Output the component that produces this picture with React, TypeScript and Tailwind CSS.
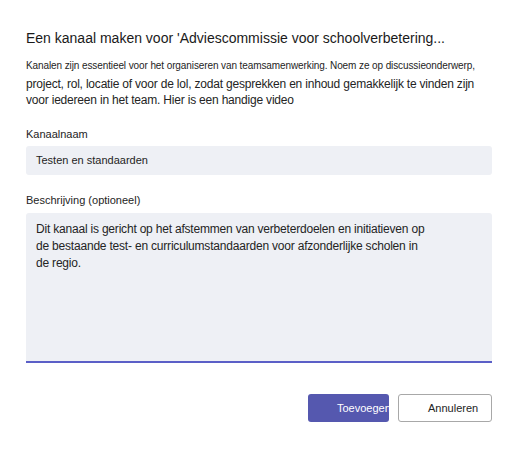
export default function App() {
  return (
    <div className="h-[449px] w-[520px] bg-white font-['Liberation_Sans',Arial,sans-serif] text-[#242424]">
      <div className="px-[26px] pt-[29px]">
        <h1 className="whitespace-nowrap text-[14px] leading-[18px] text-[#1a1a1a]">
          Een kanaal maken voor 'Adviescommissie voor schoolverbetering...
        </h1>
        <p className="mt-[12px] text-[10px] leading-[14px] tracking-[-0.1px]">
          Kanalen zijn essentieel voor het organiseren van teamsamenwerking. Noem ze op discussieonderwerp,
        </p>
        <p className="mt-[3px] text-[12px] leading-[16px] tracking-[-0.2px]">
          project, rol, locatie of voor de lol, zodat gesprekken en inhoud gemakkelijk te vinden zijn voor iedereen in het team. Hier is een handige video
        </p>

        <label className="mt-[19px] block text-[11px] leading-[15px]">Kanaalnaam</label>
        <div className="mt-[4px] flex h-[29px] w-[466px] items-center rounded-[3px] bg-[#eef0f5] px-[10px] text-[11px]">
          Testen en standaarden
        </div>

        <label className="mt-[18px] block text-[11px] leading-[15px]">Beschrijving (optioneel)</label>
        <div className="mt-[5px] h-[150px] w-[466px] rounded-t-[3px] border-b-2 border-[#5b5fc7] bg-[#eef0f5] px-[10px] pt-[8px] text-[12px] leading-[17px] tracking-[-0.2px]">
          <p className="w-[395px]">
            Dit kanaal is gericht op het afstemmen van verbeterdoelen en initiatieven op de bestaande test- en curriculumstandaarden voor afzonderlijke scholen in de regio.
          </p>
        </div>

        <div className="mt-[31px] flex w-[466px] justify-end gap-[9px]">
          <button className="h-[28px] w-[81px] overflow-hidden whitespace-nowrap rounded-[3px] bg-[#5558af] pl-[29px] text-left text-[11px] text-white">
            Toevoegen
          </button>
          <button className="h-[28px] w-[94px] rounded-[3px] border border-[#a8a8a8] bg-white pl-[29px] text-left text-[11px] text-[#242424]">
            Annuleren
          </button>
        </div>
      </div>
    </div>
  );
}
